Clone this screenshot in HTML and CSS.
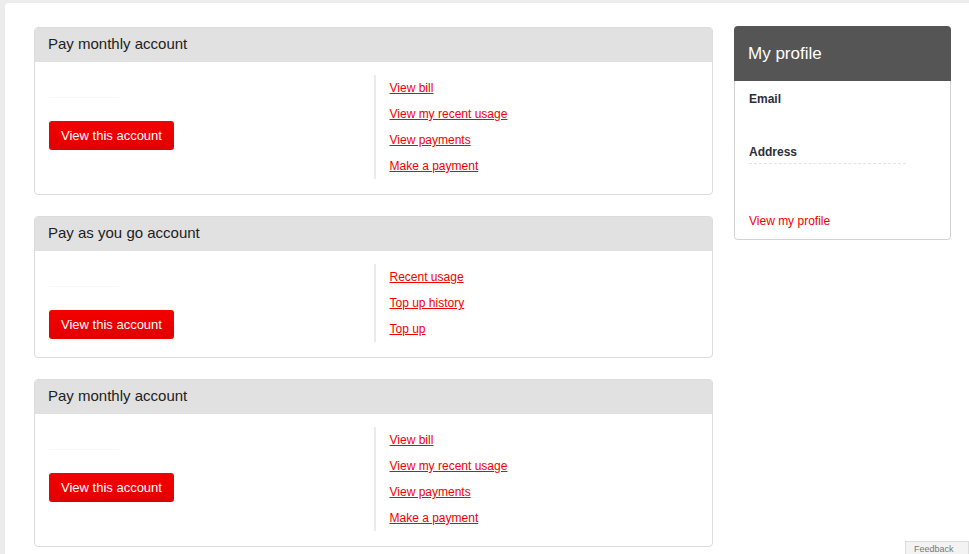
FILE: index.html
```html
<!DOCTYPE html>
<html>
<head>
    <meta name="viewport" content="width=device-width, initial-scale=1.0">
    <title>My accounts</title>
    <link rel="stylesheet" href="styles.css">
</head>
<body>
    <div class="page">
        <div class="accounts">
            <div class="account-card">
                <div class="card-header">Pay monthly account</div>
                <div class="card-body">
                    <div class="card-main">
                        <div class="account-number"></div>
                        <a class="btn" href="#">View this account</a>
                    </div>
                    <ul class="card-links">
                        <li><a href="#">View bill</a></li>
                        <li><a href="#">View my recent usage</a></li>
                        <li><a href="#">View payments</a></li>
                        <li><a href="#">Make a payment</a></li>
                    </ul>
                </div>
            </div>

            <div class="account-card">
                <div class="card-header">Pay as you go account</div>
                <div class="card-body">
                    <div class="card-main">
                        <div class="account-number"></div>
                        <a class="btn" href="#">View this account</a>
                    </div>
                    <ul class="card-links">
                        <li><a href="#">Recent usage</a></li>
                        <li><a href="#">Top up history</a></li>
                        <li><a href="#">Top up</a></li>
                    </ul>
                </div>
            </div>

            <div class="account-card">
                <div class="card-header">Pay monthly account</div>
                <div class="card-body">
                    <div class="card-main">
                        <div class="account-number"></div>
                        <a class="btn" href="#">View this account</a>
                    </div>
                    <ul class="card-links">
                        <li><a href="#">View bill</a></li>
                        <li><a href="#">View my recent usage</a></li>
                        <li><a href="#">View payments</a></li>
                        <li><a href="#">Make a payment</a></li>
                    </ul>
                </div>
            </div>
        </div>

        <div class="profile">
            <div class="profile-header">My profile</div>
            <div class="profile-body">
                <dl class="profile-details">
                    <dt>Email</dt>
                    <dd class="email-value"></dd>
                    <dt>Address</dt>
                    <dd class="address-value"><span class="blurred"></span></dd>
                </dl>
                <a class="profile-link" href="#">View my profile</a>
            </div>
        </div>
    </div>

    <div class="feedback-tab">Feedback</div>
</body>
</html>
```

FILE: styles.css
```css
* {
    box-sizing: border-box;
}

html, body {
    height: 100%;
}

body {
    margin: 0;
    padding: 3px 0 0 5px;
    background: #ececec;
    font-family: 'Liberation Sans', Arial, sans-serif;
    color: #222;
    overflow: hidden;
}

.page {
    background: #fff;
    border-top-left-radius: 4px;
    min-height: 100%;
    padding: 23px 18px 0 29px;
    display: grid;
    grid-template-columns: 679px 217px;
    column-gap: 21px;
    align-items: start;
}

.accounts {
    display: flex;
    flex-direction: column;
    gap: 21px;
    margin-top: 1px;
}

.account-card {
    border: 1px solid #dcdcdc;
    border-radius: 4px;
    overflow: hidden;
}

.card-header {
    background: #e1e1e1;
    height: 34px;
    line-height: 32px;
    padding: 0 13px;
    font-size: 15px;
    color: #222;
}

.card-body {
    display: grid;
    grid-template-columns: 1fr 1fr;
    padding: 13px 0 15px;
}

.card-main {
    padding-left: 14px;
}

.account-number {
    width: 70px;
    height: 23px;
    border-bottom: 1px solid #f7f7f7;
    margin-bottom: 23px;
}

.btn {
    display: inline-block;
    height: 29px;
    line-height: 29px;
    padding: 0 12px;
    background: linear-gradient(#f40000, #e20000);
    color: #fff;
    font-size: 13px;
    text-decoration: none;
    border-radius: 3px;
}

.card-links {
    list-style: none;
    margin: 0;
    padding: 0 0 0 14px;
    border-left: 2px solid #ebebeb;
}

.card-links li {
    height: 26px;
    line-height: 26px;
    font-size: 12px;
}

.card-links a {
    color: #f20000;
}

.profile {
    border-radius: 4px;
    overflow: hidden;
}

.profile-header {
    background: #555;
    color: #fff;
    height: 55px;
    line-height: 55px;
    padding: 0 14px;
    font-size: 17px;
}

.profile-body {
    border: 1px solid #d2d2d2;
    border-top: none;
    border-radius: 0 0 4px 4px;
    padding: 10px 14px 10px;
}

.profile-details {
    margin: 0;
}

.profile-details dt {
    font-size: 12px;
    font-weight: bold;
    line-height: 16px;
    color: #2b2f38;
}

.profile-details dd {
    margin: 0;
}

.email-value {
    height: 37px;
}

.address-value {
    height: 53px;
    padding-top: 3px;
}

.blurred {
    display: block;
    width: 157px;
    border-top: 1px dashed #e4e4e4;
}

.profile-link {
    display: block;
    font-size: 12px;
    line-height: 16px;
    color: #f20000;
    text-decoration: none;
}

.feedback-tab {
    position: fixed;
    left: 905px;
    top: 541px;
    width: 64px;
    height: 13px;
    padding: 2px 8px 0;
    background: #f3f3f3;
    border: 1px solid #dcdcdc;
    border-bottom: none;
    font-size: 9px;
    line-height: 10px;
    color: #777;
    overflow: hidden;
}
```
